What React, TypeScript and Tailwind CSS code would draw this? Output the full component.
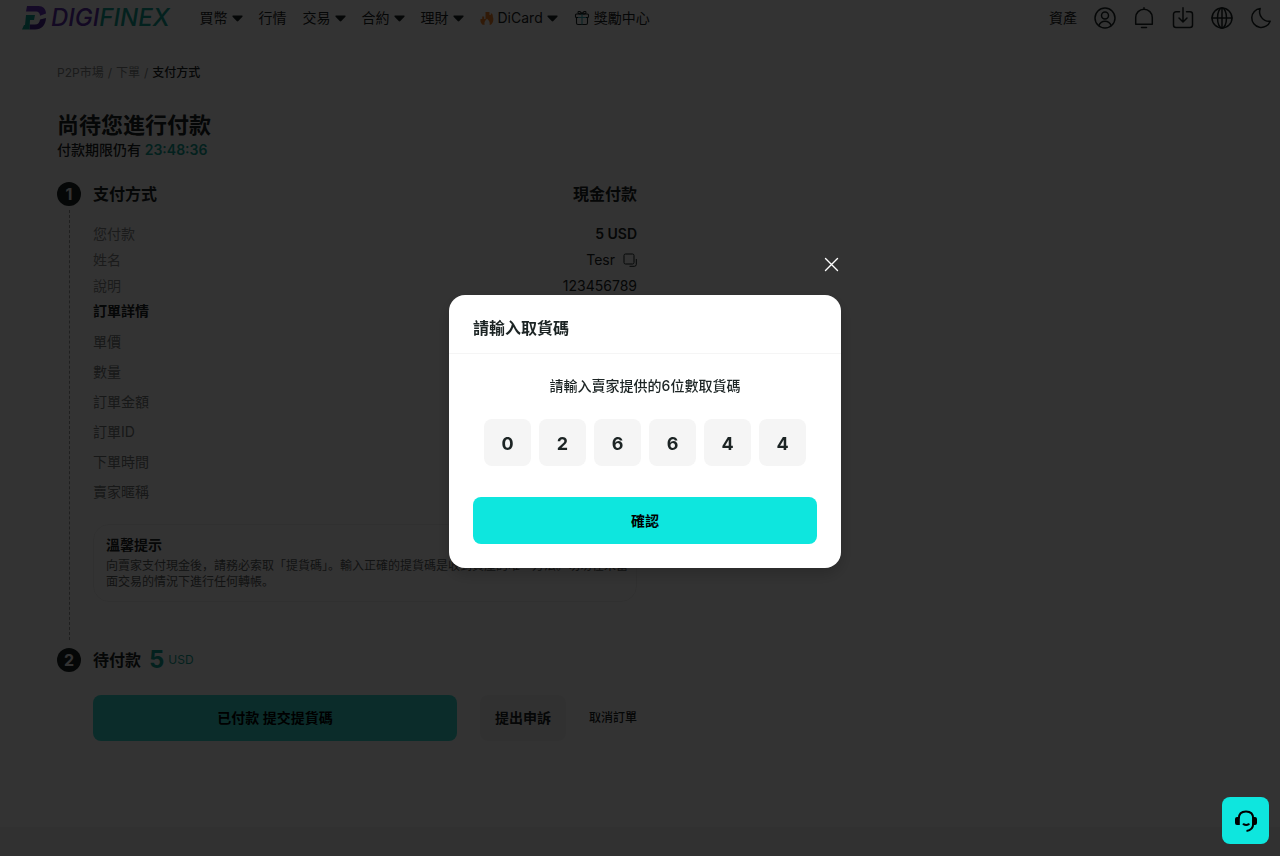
import { useState } from "react";
import type { ReactNode } from "react";

interface NavItem {
  label: string;
  hasMenu?: boolean;
  icon?: ReactNode;
}

const FlameIcon = () => (
  <svg className="w-[14px] h-[14px]" viewBox="0 0 14 14" fill="#f5842b">
    <path d="M5.500 1h4v3h1.200V2.500h1.300c1.500 2 .3 3.500 1.300 4.500.3 3-.3 5-2.300 6.700H9.500c.8-2.500-.5-4.500-2.500-6-1.800 1.500-3.200 3.500-2.300 6H2.500C.5 12 .2 10 .5 8h1.700V5.500h2V8h1.300z" />
  </svg>
);

const GiftIcon = () => (
  <svg className="w-4 h-4" viewBox="0 0 16 16" fill="none" stroke="#1c2424" strokeWidth={1.1} strokeLinejoin="round">
    <rect x="1.500" y="4" width="13" height="3.500" rx="1" />
    <path d="M2.500 7.500V13a1.500 1.500 0 001.500 1.500h8a1.500 1.500 0 001.500-1.500V7.500" />
    <path d="M8 4C7 1.500 4.500.8 4 2.200 3.600 3.200 4.600 4 8 4c3.400 0 4.400-.8 4-1.800C11.500.8 9 1.500 8 4z" />
    <path d="M8 4v10.500M4 7.500h8" stroke="#2fa8b8" />
  </svg>
);

const navItems: NavItem[] = [
  { label: "買幣", hasMenu: true },
  { label: "行情" },
  { label: "交易", hasMenu: true },
  { label: "合約", hasMenu: true },
  { label: "理財", hasMenu: true },
  { label: "DiCard", hasMenu: true, icon: <FlameIcon /> },
  { label: "獎勵中心", icon: <GiftIcon /> },
];

const toolIcons: { name: string; drawing: ReactNode }[] = [
  {
    name: "帳戶",
    drawing: (
      <>
        <circle cx="11" cy="11" r="10" />
        <circle cx="11" cy="8.500" r="3.500" />
        <path d="M4.800 18.500c1.200-3 3.300-4.300 6.200-4.300s5 1.300 6.200 4.300" />
      </>
    ),
  },
  {
    name: "通知",
    drawing: <path d="M11 .8v1.400M2.700 17.200V10.500a8.300 8.300 0 0116.600 0v6.700zM8.500 20.500h5" />,
  },
  {
    name: "下載",
    drawing: (
      <>
        <path d="M7.500 4.800H4A2.500 2.500 0 001.500 7.300V18A2.500 2.500 0 004 20.500h14a2.500 2.500 0 002.500-2.500V7.300A2.500 2.500 0 0018 4.800h-3.500" />
        <path d="M11 .8v14M7 11l4 4 4-4" />
      </>
    ),
  },
  {
    name: "語言",
    drawing: (
      <>
        <circle cx="11" cy="11" r="10" />
        <ellipse cx="11" cy="11" rx="4.500" ry="10" />
        <path d="M1 11h20M11 1v20" />
      </>
    ),
  },
  {
    name: "深色模式",
    drawing: <path d="M10.200 1.500A9.500 9.500 0 1020.200 14.200 9.500 9.500 0 0110.200 1.500z" />,
  },
];

const orderDetails = ["單價", "數量", "訂單金額", "訂單ID", "下單時間", "賣家暱稱"];

function Logo() {
  return (
    <a href="#" className="flex items-center gap-[5px]" aria-label="DigiFinex">
      <svg className="w-6 h-6" viewBox="0 0 24 24">
        <path d="M5 0h11.500C21 0 24 3 24 7.500l-6 2.300C18 7.300 16.500 5.500 14 5.500H4z" fill="#6a32c4" />
        <path d="M24 12c-.3 7-4.500 11.500-11 11.500H7.500v-5H13c3 0 4.700-2 5-5z" fill="#4b2495" />
        <path d="M4 9h9l-1 5H8l-.500 9.500H0L2 19h1z" fill="#12a596" />
      </svg>
      <span className="text-2xl leading-6 font-medium italic text-[#5f2eb0]">
        DIGI<span className="text-[#12a596]">FINEX</span>
      </span>
    </a>
  );
}

function Header() {
  return (
    <header className="flex h-9 items-center justify-between pl-[22px] pr-2 text-sm">
      <div className="flex items-center gap-[30px]">
        <Logo />
        <nav className="flex items-center gap-4">
          {navItems.map((item) => (
            <a key={item.label} href="#" className="flex items-center gap-1 whitespace-nowrap">
              {item.icon}
              {item.label}
              {item.hasMenu && (
                <svg className="w-[11px] h-[7px]" viewBox="0 0 11 7" fill="currentColor">
                  <path d="M1.200 0.500h8.600c.8 0 1 .7.600 1.200L6.400 6c-.5.500-1.300.5-1.800 0L.6 1.700C.2 1.200.4.5 1.200.5z" />
                </svg>
              )}
            </a>
          ))}
        </nav>
      </div>
      <div className="flex items-center gap-[17px]">
        <a href="#">資產</a>
        {toolIcons.map((tool) => (
          <button key={tool.name} type="button" aria-label={tool.name}>
            <svg
              className="w-[22px] h-[22px]"
              viewBox="0 0 22 22"
              fill="none"
              stroke="currentColor"
              strokeWidth={1.5}
              strokeLinecap="round"
              strokeLinejoin="round"
            >
              {tool.drawing}
            </svg>
          </button>
        ))}
      </div>
    </header>
  );
}

function StepNumber({ value }: { value: number }) {
  return (
    <span className="flex size-6 shrink-0 items-center justify-center rounded-full bg-[#1c2424] text-base font-bold text-white">
      {value}
    </span>
  );
}

function PaymentInfo() {
  return (
    <section className="mt-[22px] flex gap-3">
      <div className="flex flex-col items-center">
        <StepNumber value={1} />
        <div className="mt-1 mb-2 flex-1 border-l border-dashed border-[#999c9c]" />
      </div>
      <div className="min-w-0 flex-1 pb-[46px]">
        <div className="flex h-6 items-center justify-between text-base font-bold">
          <h2>支付方式</h2>
          <span>現金付款</span>
        </div>
        <dl className="mt-[15px] text-sm">
          <div className="flex h-[26px] items-center justify-between">
            <dt className="text-[#858888]">您付款</dt>
            <dd className="font-semibold">5 USD</dd>
          </div>
          <div className="flex h-[26px] items-center justify-between">
            <dt className="text-[#858888]">姓名</dt>
            <dd className="flex items-center gap-2">
              Tesr
              <button type="button" aria-label="複製">
                <svg className="w-[14px] h-[14px]" viewBox="0 0 14 14" fill="none" stroke="currentColor">
                  <rect x="1" y="1" width="10" height="10" rx="1.500" />
                  <path d="M13.300 6v5.300a2 2 0 01-2 2H6.500" />
                </svg>
              </button>
            </dd>
          </div>
          <div className="flex h-[26px] items-center justify-between">
            <dt className="text-[#858888]">說明</dt>
            <dd>123456789</dd>
          </div>
        </dl>
        <h3 className="flex h-6 items-center text-sm font-bold">訂單詳情</h3>
        <ul className="mt-1 text-sm text-[#747878]">
          {orderDetails.map((label) => (
            <li key={label} className="flex h-[30px] items-center">
              {label}
            </li>
          ))}
        </ul>
        <div className="mt-[17px] rounded-2xl border border-[#f0f0f0] pt-[10px] pb-[11px] pl-3">
          <h4 className="text-sm font-bold">溫馨提示</h4>
          <p className="mt-[3px] text-xs text-[#5c6161]">
            向賣家支付現金後，請務必索取「提貨碼」。輸入正確的提貨碼是收到資產的唯一方法。切勿在未當面交易的情況下進行任何轉帳。
          </p>
        </div>
      </div>
    </section>
  );
}

function PendingPayment() {
  return (
    <section>
      <div className="flex h-6 items-center gap-3">
        <StepNumber value={2} />
        <h2 className="text-base font-bold">待付款</h2>
        <p className="-ml-1 flex items-center gap-1 text-[#12a596]">
          <span className="text-2xl font-bold">5</span>
          <span className="text-xs">USD</span>
        </p>
      </div>
      <div className="mt-[23px] flex items-center gap-[23px] pl-9 whitespace-nowrap">
        <button type="button" className="h-[46px] flex-1 rounded-lg bg-[#38dcd2] text-sm font-bold text-black">
          已付款 提交提貨碼
        </button>
        <button type="button" className="h-[46px] rounded-lg bg-[#f5f5f5] px-[15px] text-sm font-bold">
          提出申訴
        </button>
        <button type="button" className="text-xs font-medium">
          取消訂單
        </button>
      </div>
    </section>
  );
}

function PickupCodeModal() {
  const [code, setCode] = useState(["0", "2", "6", "6", "4", "4"]);

  const updateDigit = (index: number, value: string) => {
    setCode(code.map((digit, i) => (i === index ? value.slice(-1) : digit)));
  };

  return (
    <div className="fixed inset-0 z-10 flex items-center justify-center bg-black/80 pt-[7px] pl-[10px]">
      <div
        role="dialog"
        aria-labelledby="pickup-title"
        className="relative w-[392px] rounded-2xl bg-white shadow-[0_6px_16px_rgba(0,0,0,0.2)]"
      >
        <button type="button" aria-label="關閉" className="absolute -top-[38px] right-[2px] text-white">
          <svg className="w-[15px] h-[15px]" viewBox="0 0 15 15" stroke="currentColor" strokeWidth={1.4} strokeLinecap="round">
            <path d="M1.500 1.500l12 12M13.500 1.500l-12 12" />
          </svg>
        </button>
        <h2 id="pickup-title" className="border-b border-[#f5f5f5] px-6 pt-[21px] pb-[13px] text-base font-bold">
          請輸入取貨碼
        </h2>
        <form className="px-6 pt-[22px] pb-6" onSubmit={(e) => e.preventDefault()}>
          <p className="text-center text-sm font-medium">請輸入賣家提供的6位數取貨碼</p>
          <div className="mt-[23px] flex justify-center gap-2">
            {code.map((digit, index) => (
              <input
                key={index}
                aria-label={`取貨碼第${index + 1}位`}
                inputMode="numeric"
                value={digit}
                onChange={(e) => updateDigit(index, e.target.value)}
                className="size-[47px] rounded-lg bg-[#f5f5f5] pt-[2px] text-center text-lg font-bold outline-none"
              />
            ))}
          </div>
          <button
            type="submit"
            className="mt-[31px] h-[47px] w-full rounded-lg bg-[#0ee6de] text-sm font-bold text-black"
          >
            確認
          </button>
        </form>
      </div>
    </div>
  );
}

export default function App() {
  return (
    <div className="flex min-h-screen flex-col bg-white font-['Inter','Noto_Sans_CJK_SC',sans-serif] text-[#1c2424]">
      <Header />
      <main className="flex-1 px-[57px] pt-[29px]">
        <nav className="flex gap-1 text-xs text-[#858888]">
          <a href="#">P2P市場</a>
          <span>/</span>
          <a href="#">下單</a>
          <span>/</span>
          <span className="font-medium text-[#1c2424]">支付方式</span>
        </nav>
        <div className="max-w-[580px]">
          <h1 className="mt-[29px] text-[22px] leading-[30px] font-bold">尚待您進行付款</h1>
          <p className="text-sm font-medium">
            付款期限仍有 <span className="font-semibold text-[#12a596]">23:48:36</span>
          </p>
          <PaymentInfo />
          <PendingPayment />
        </div>
      </main>
      <footer className="h-[29px] bg-[#f2f2f2]" />

      <PickupCodeModal />

      <button
        type="button"
        aria-label="客服"
        className="fixed right-[11px] bottom-3 z-20 flex size-[47px] items-center justify-center rounded-lg bg-[#0ee6de] text-black"
      >
        <svg className="w-6 h-6" viewBox="0 0 24 24" fill="none" stroke="currentColor" strokeWidth={2}>
          <path d="M4.800 9.500C4.800 5 7.500 2.500 12 2.500s7.200 2.500 7.200 7v5c0 4.500-2.500 7-6.700 7.500" />
          <path d="M9.500 15.200c1.500 1 3.800 1 5.300 0" strokeLinecap="round" />
          <path d="M5.800 8v8H3A2 2 0 011 14v-4A2 2 0 013 8zM18.200 8v8H21a2 2 0 002-2v-4a2 2 0 00-2-2z" fill="currentColor" stroke="none" />
        </svg>
      </button>
    </div>
  );
}
